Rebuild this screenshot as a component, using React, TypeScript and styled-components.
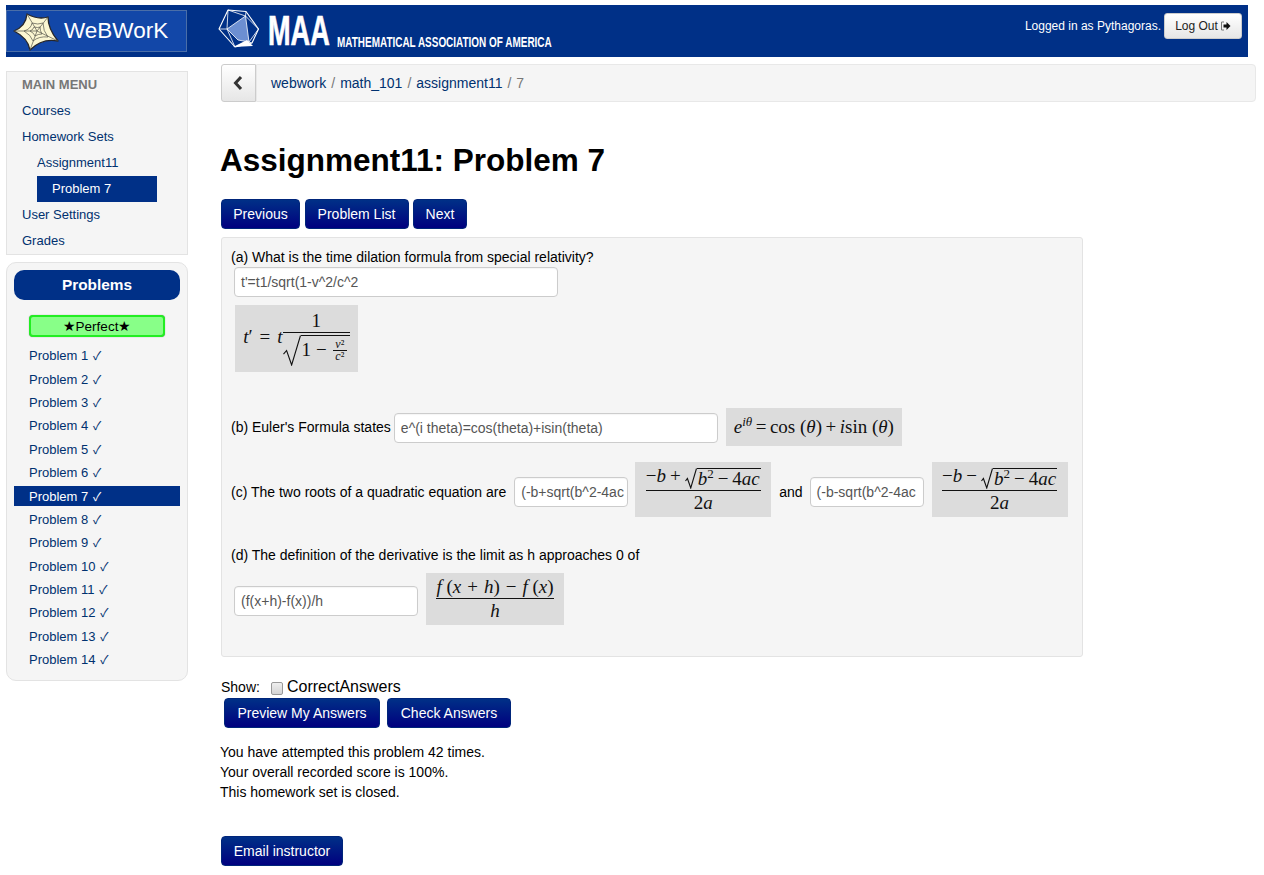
import React from "react";
import styled, { createGlobalStyle } from "styled-components";

const NAVY = "#003087";
const LINK = "#00316f";

const Global = createGlobalStyle`
  html, body { margin: 0; padding: 0; background: #fff; }
  body { font-family: "Liberation Sans", Arial, sans-serif; font-size: 14px; line-height: 20px; color: #000; }
  * { box-sizing: border-box; }
`;

const Page = styled.div`
  width: 1264px;
  height: 875px;
  overflow: hidden;
  padding: 5px 8px 0 6px;
`;

const Header = styled.header`
  width: 1242px;
  height: 52px;
  background: ${NAVY};
  display: flex;
  align-items: center;
  color: #fff;
`;

const LogoBox = styled.div`
  width: 181px;
  height: 42px;
  background: #1247a8;
  border: 1px solid #4a6ea8;
  display: flex;
  align-items: center;
  padding-left: 6px;
  gap: 5px;
  font-size: 22.5px;
  color: #fff;
`;

const MaaBlock = styled.div`
  margin-left: 31px;
  display: flex;
  align-items: center;
  height: 52px;
  width: 340px;
  flex: none;
`;

const MaaMark = styled.span`
  font-weight: 700;
  font-size: 43px;
  line-height: 38px;
  width: 62px;
  margin-left: 9px;
  margin-top: -3px;
  flex: none;
  -webkit-text-stroke: 0.7px #fff;
  transform: scaleX(0.63);
  transform-origin: left center;
`;

const MaaName = styled.span`
  font-weight: 700;
  font-size: 14px;
  white-space: nowrap;
  margin-left: 7px;
  margin-top: 22px;
  flex: none;
  transform: scaleX(0.711);
  transform-origin: left center;
`;

const UserArea = styled.div`
  margin-left: auto;
  margin-right: 6px;
  margin-bottom: 10px;
  display: flex;
  align-items: center;
  gap: 3px;
  font-size: 12px;
`;

const LogOut = styled.button`
  width: 78px;
  height: 26px;
  padding: 0;
  border: 1px solid #ccc;
  border-radius: 3px;
  background: linear-gradient(#fff, #e6e6e6);
  font: 12px "Liberation Sans", sans-serif;
  color: #222;
  display: flex;
  align-items: center;
  justify-content: center;
  gap: 2px;
`;

const Body = styled.div`
  display: flex;
  align-items: flex-start;
`;

const Sidebar = styled.aside`
  width: 182px;
  margin-top: 14px;
  display: flex;
  flex-direction: column;
  gap: 7px;
  font-size: 13px;
`;

const MenuPanel = styled.nav`
  height: 184px;
  background: #f5f5f5;
  border: 1px solid #e3e3e3;
  padding: 0 0 0 15px;
`;

const MenuHead = styled.div`
  height: 26px;
  line-height: 25px;
  font-weight: 700;
  color: #777;
  text-transform: uppercase;
`;

const MenuItem = styled.div<{ $sub?: boolean; $active?: boolean }>`
  height: 26px;
  line-height: 26px;
  color: ${(p) => (p.$active ? "#fff" : LINK)};
  background: ${(p) => (p.$active ? NAVY : "transparent")};
  margin-left: ${(p) => (p.$sub ? "15px" : "0")};
  padding-left: ${(p) => (p.$active ? "15px" : "0")};
  width: ${(p) => (p.$active ? "120px" : "auto")};
`;

const ProblemsPanel = styled.div`
  height: 419px;
  background: #f5f5f5;
  border: 1px solid #e3e3e3;
  border-radius: 10px;
  padding: 7px 7px 0;
`;

const ProblemsHead = styled.div`
  height: 30px;
  background: ${NAVY};
  border-radius: 10px;
  color: #fff;
  font-weight: 700;
  font-size: 15.4px;
  text-align: center;
  line-height: 30px;
`;

const Perfect = styled.div`
  width: 136px;
  height: 22px;
  margin: 15px 0 8.3px 15px;
  background: #88ff88;
  border: 2px solid #22ee22;
  border-radius: 4px;
  box-shadow: 0 0 1px #777;
  text-align: center;
  font-size: 13.5px;
  line-height: 20px;
  color: #000;
`;

const ProblemItem = styled.div<{ $active?: boolean }>`
  height: 20px;
  line-height: 19px;
  margin-bottom: 3.38px;
  padding-left: 15px;
  color: ${(p) => (p.$active ? "#fff" : LINK)};
  background: ${(p) => (p.$active ? NAVY : "transparent")};
`;

const Tick = styled.span`
  font-family: "Noto Sans CJK SC", "DejaVu Sans", sans-serif;
  margin-left: 1px;
  font-size: 12px;
`;

const Main = styled.main`
  margin-left: 33px;
  width: 1035px;
  flex: none;
  padding-top: 7px;
`;

const CrumbRow = styled.div`
  display: flex;
  height: 38px;
`;

const BackButton = styled.button`
  width: 35px;
  height: 38px;
  padding: 0;
  border: 1px solid #ccc;
  border-radius: 3px 0 0 3px;
  background: linear-gradient(#fff, #e6e6e6);
  display: flex;
  align-items: center;
  justify-content: center;
  color: #333;
`;

const Crumbs = styled.div`
  flex: 1;
  background: #f5f5f5;
  border: 1px solid #e8e8e8;
  border-radius: 0 4px 4px 0;
  padding-left: 14px;
  line-height: 36px;
  color: #777;
  display: flex;
  gap: 5px;
`;

const CrumbLink = styled.span`
  color: ${LINK};
`;

const Title = styled.h1`
  margin: 38px 0 0 -1px;
  font-size: 31.5px;
  line-height: 40px;
  font-weight: 700;
  color: #000;
`;

const ButtonRow = styled.div<{ $left?: number; $gap?: number; $top?: number }>`
  display: flex;
  gap: ${(p) => p.$gap ?? 5}px;
  margin-left: ${(p) => p.$left ?? 0}px;
  margin-top: ${(p) => p.$top ?? 0}px;
`;

const NavButton = styled.button<{ $w: number }>`
  width: ${(p) => p.$w}px;
  height: 30px;
  padding: 0;
  border: 1px solid #00257a;
  border-radius: 4px;
  background: linear-gradient(${NAVY}, #00007f);
  color: #fff;
  font: 14px "Liberation Sans", sans-serif;
  white-space: nowrap;
`;

const Well = styled.section`
  width: 862px;
  height: 420px;
  margin-top: 8px;
  background: #f5f5f5;
  border: 1px solid #e3e3e3;
  border-radius: 3px;
  padding: 9px 9px 0;
`;

const Line = styled.div`
  line-height: 20px;
`;

const Row = styled.div<{ $top: number }>`
  display: flex;
  align-items: center;
  margin-top: ${(p) => p.$top}px;
  white-space: nowrap;
`;

const Label = styled.span<{ $mt?: number; $ml?: number; $mr?: number }>`
  margin: ${(p) => p.$mt ?? 0}px ${(p) => p.$mr ?? 0}px 0 ${(p) => p.$ml ?? 0}px;
`;

const Answer = styled.div<{ $w: number; $ml?: number; $mt?: number }>`
  width: ${(p) => p.$w}px;
  height: 30px;
  flex: none;
  margin-left: ${(p) => p.$ml ?? 0}px;
  margin-top: ${(p) => p.$mt ?? 0}px;
  background: #fff;
  border: 1px solid #ccc;
  border-radius: 4px;
  padding: 0 6px;
  line-height: 29px;
  color: #555;
  overflow: hidden;
  white-space: nowrap;
  box-shadow: inset 0 1px 1px rgba(0, 0, 0, 0.04);
`;

const MathBox = styled.div<{ $w: number; $h: number; $ml?: number; $top?: number }>`
  width: ${(p) => p.$w}px;
  height: ${(p) => p.$h}px;
  flex: none;
  margin-left: ${(p) => p.$ml ?? 0}px;
  margin-top: ${(p) => p.$top ?? 0}px;
  background: #dcdcdc;
  display: flex;
  align-items: center;
  justify-content: center;
  font-family: "Liberation Serif", serif;
  font-size: 19px;
  color: #111;
  white-space: nowrap;
`;

const MathLine = styled.span`
  display: inline-block;
  line-height: 20px;
`;

const V = styled.i`
  font-style: italic;
`;

const Frac = styled.span`
  display: inline-flex;
  flex-direction: column;
  align-items: stretch;
  text-align: center;
  vertical-align: middle;
  line-height: 20px;
`;

const Num = styled.span`
  display: block;
  border-bottom: 1px solid #111;
  padding-bottom: 1px;
  text-align: center;
`;

const Den = styled.span`
  display: block;
  padding-top: 2px;
  text-align: center;
`;

const SmallFrac = styled.span`
  display: inline-flex;
  flex-direction: column;
  width: 14px;
  font-size: 12px;
  line-height: 11px;
  text-align: center;
  vertical-align: top;
  margin: 3px 2px 0 1px;
`;

const SmallNum = styled.span`
  display: block;
  border-bottom: 1px solid #111;
`;

const SmallDen = styled.span`
  display: block;
`;

const Radical = styled.span`
  display: inline-flex;
  align-items: stretch;
  vertical-align: middle;
`;

const Radicand = styled.span`
  display: inline-block;
  border-top: 1px solid #111;
  padding: 0 1px;
  white-space: nowrap;
  line-height: 28px;
`;

const Radicand2 = styled(Radicand)`
  line-height: 20px;
`;

const Op = styled.span<{ $m?: number }>`
  margin: 0 ${(p) => p.$m ?? 4}px;
`;

const Sup = styled.sup`
  font-size: 13px;
  line-height: 0;
`;

const ShowRow = styled.div`
  display: flex;
  align-items: center;
  height: 20px;
  margin-top: 20px;
`;

const Check = styled.span`
  width: 12px;
  height: 13px;
  margin: 2px 4px 0 11px;
  border: 1px solid #999;
  border-radius: 2px;
  background: linear-gradient(#eee, #d4d4d4);
`;

const BigLabel = styled.span`
  font-size: 16px;
`;

const Status = styled.div`
  margin: 14px 0 0 -1px;
`;

function Root({ h, w }: { h: number; w: number }) {
  return (
    <svg width={w} height={h} viewBox={`0 0 ${w} ${h}`} style={{ flex: "none" }}>
      <path
        d={`M0.5 ${h * 0.62} L${w * 0.2} ${h * 0.5} L${w * 0.48} ${h - 1} L${w - 0.5} 0.5`}
        fill="none"
        stroke="#111"
        strokeWidth="1.1"
      />
    </svg>
  );
}

function StarLogo() {
  return (
    <svg width="46" height="40" viewBox="0 0 46 40" style={{ flex: "none" }}>
      <path
        d="M14 3 Q25 9 35 6 Q35 18 45 30 Q29 27 17 39 Q15 27 1 20 Q13 15 14 3 Z"
        fill="#fbf7d2"
        stroke="#26262a"
        strokeWidth="1.3"
        strokeLinejoin="round"
      />
      <g fill="none" stroke="#55554a" strokeWidth="0.7">
        <path d="M24 20 L14 3 M24 20 L35 6 M24 20 L45 30 M24 20 L17 39 M24 20 L1 20" />
        <path d="M19 12 Q25 14 30 12 Q30 20 35 26 Q26 25 20 30 Q18 24 11 20 Q18 18 19 12 Z" />
        <path d="M21 16 Q25 17 27 16 Q27 20 29 23 Q25 23 22 25 Q21 22 17 20 Q20 19 21 16 Z" />
      </g>
    </svg>
  );
}

function MaaLogo() {
  return (
    <svg width="41" height="39" viewBox="0 0 41 39" style={{ flex: "none", marginTop: -5 }}>
      <path d="M10 1 L28 2.5 L40.5 20 L34 34 L17 38 L1 20 Z" fill={NAVY} stroke="#fff" strokeWidth="1.1" strokeLinejoin="round" />
      <path d="M9 20 L27.5 7 L31 33 L20 31 Z" fill="#6c8fd2" />
      <path d="M15 38 L29 31 L35 37 Z" fill="#fff" />
      <path
        d="M10 1 L27.5 7 M10 1 L9 20 M1 20 L9 20 M28 2.5 L27.5 7 M27.5 7 L9 20 M9 20 L20 31 M27.5 7 L31 33 M27.5 7 L40.5 20 M40.5 20 L31 33 M9 20 L17 38 M20 31 L31 33 M34 34 L31 33"
        stroke="#fff"
        strokeWidth="0.8"
        fill="none"
      />
    </svg>
  );
}

function LogOutIcon() {
  return (
    <svg width="11" height="10" viewBox="0 0 11 10">
      <path d="M4 1 H1.5 V9 H4" fill="none" stroke="#777" strokeWidth="1" />
      <path d="M3.5 3.5 H6.5 V1 L10.5 5 L6.5 9 V6.5 H3.5 Z" fill="#111" />
    </svg>
  );
}

function Chevron() {
  return (
    <svg width="12" height="16" viewBox="0 0 12 16" style={{ marginLeft: -2 }}>
      <path d="M9 2 L3.5 8 L9 14" fill="none" stroke="#333" strokeWidth="3" />
    </svg>
  );
}

const problems = Array.from({ length: 14 }, (_, i) => i + 1);

export default function App() {
  return (
    <Page>
      <Global />
      <Header>
        <LogoBox>
          <StarLogo />
          <span>WeBWorK</span>
        </LogoBox>
        <MaaBlock>
          <MaaLogo />
          <MaaMark>MAA</MaaMark>
          <MaaName>MATHEMATICAL ASSOCIATION OF AMERICA</MaaName>
        </MaaBlock>
        <UserArea>
          <span>Logged in as Pythagoras.</span>
          <LogOut>
            Log Out <LogOutIcon />
          </LogOut>
        </UserArea>
      </Header>
      <Body>
        <Sidebar>
          <MenuPanel>
            <MenuHead>Main Menu</MenuHead>
            <MenuItem>Courses</MenuItem>
            <MenuItem>Homework Sets</MenuItem>
            <MenuItem $sub>Assignment11</MenuItem>
            <MenuItem $sub $active>Problem 7</MenuItem>
            <MenuItem>User Settings</MenuItem>
            <MenuItem>Grades</MenuItem>
          </MenuPanel>
          <ProblemsPanel>
            <ProblemsHead>Problems</ProblemsHead>
            <Perfect>★Perfect★</Perfect>
            {problems.map((n) => (
              <ProblemItem key={n} $active={n === 7}>
                Problem {n} <Tick>✓</Tick>
              </ProblemItem>
            ))}
          </ProblemsPanel>
        </Sidebar>
        <Main>
          <CrumbRow>
            <BackButton aria-label="Back">
              <Chevron />
            </BackButton>
            <Crumbs>
              <CrumbLink>webwork</CrumbLink>/<CrumbLink>math_101</CrumbLink>/<CrumbLink>assignment11</CrumbLink>/<span>7</span>
            </Crumbs>
          </CrumbRow>
          <Title>Assignment11: Problem 7</Title>
          <ButtonRow $top={19} $gap={4.5}>
            <NavButton $w={79}>Previous</NavButton>
            <NavButton $w={104}>Problem List</NavButton>
            <NavButton $w={54}>Next</NavButton>
          </ButtonRow>
          <Well>
            <Line>(a) What is the time dilation formula from special relativity?</Line>
            <Answer $w={324} $ml={3}>t'=t1/sqrt(1-v^2/c^2</Answer>
            <MathBox $w={123} $h={67} $ml={4} $top={8}>
              <MathLine>
                <V>t</V>′<Op $m={7}>=</Op><V>t</V>
                <Frac>
                  <Num>1</Num>
                  <Den>
                    <Radical>
                      <Root w={18} h={31} />
                      <Radicand>
                        1<Op $m={5}>−</Op>
                        <SmallFrac>
                          <SmallNum><V>v</V>²</SmallNum>
                          <SmallDen><V>c</V>²</SmallDen>
                        </SmallFrac>
                      </Radicand>
                    </Radical>
                  </Den>
                </Frac>
              </MathLine>
            </MathBox>
            <Row $top={36}>
              (b) Euler's Formula states
              <Answer $w={324} $ml={3} $mt={2}>e^(i theta)=cos(theta)+isin(theta)</Answer>
              <MathBox $w={176} $h={38} $ml={8}>
                <MathLine>
                  <V>e</V>
                  <Sup><V>iθ</V></Sup>
                  <Op $m={3.5}>=</Op>cos (<V>θ</V>)<Op $m={3.5}>+</Op><V>i</V>sin (<V>θ</V>)
                </MathLine>
              </MathBox>
            </Row>
            <Row $top={16}>
              <Label $mt={4}>(c) The two roots of a quadratic equation are</Label>
              <Answer $w={114} $ml={8} $mt={4}>(-b+sqrt(b^2-4ac</Answer>
              <MathBox $w={136} $h={55} $ml={7}>
                <MathLine>
                  <Frac>
                    <Num>
                      −<V>b</V><Op>+</Op>
                      <Radical>
                        <Root w={12} h={21} />
                        <Radicand2><V>b</V><Sup>2</Sup><Op>−</Op>4<V>ac</V></Radicand2>
                      </Radical>
                    </Num>
                    <Den>2<V>a</V></Den>
                  </Frac>
                </MathLine>
              </MathBox>
              <Label $mt={4} $ml={8} $mr={7}>and</Label>
              <Answer $w={114} $mt={4}>(-b-sqrt(b^2-4ac</Answer>
              <MathBox $w={136} $h={55} $ml={8}>
                <MathLine>
                  <Frac>
                    <Num>
                      −<V>b</V><Op>−</Op>
                      <Radical>
                        <Root w={12} h={21} />
                        <Radicand2><V>b</V><Sup>2</Sup><Op>−</Op>4<V>ac</V></Radicand2>
                      </Radical>
                    </Num>
                    <Den>2<V>a</V></Den>
                  </Frac>
                </MathLine>
              </MathBox>
            </Row>
            <Row $top={28}>(d) The definition of the derivative is the limit as h approaches 0 of</Row>
            <Row $top={8}>
              <Answer $w={184} $ml={3} $mt={4}>(f(x+h)-f(x))/h</Answer>
              <MathBox $w={138} $h={52} $ml={8}>
                <MathLine>
                  <Frac>
                    <Num>
                      <V>f</V> (<V>x</V><Op $m={6}>+</Op><V>h</V>)<Op $m={6}>−</Op><V>f</V> (<V>x</V>)
                    </Num>
                    <Den><V>h</V></Den>
                  </Frac>
                </MathLine>
              </MathBox>
            </Row>
          </Well>
          <ShowRow>
            Show:
            <Check />
            <BigLabel>CorrectAnswers</BigLabel>
          </ShowRow>
          <ButtonRow $left={3} $gap={7} $top={1}>
            <NavButton $w={156}>Preview My Answers</NavButton>
            <NavButton $w={124}>Check Answers</NavButton>
          </ButtonRow>
          <Status>
            <Line>You have attempted this problem 42 times.</Line>
            <Line>Your overall recorded score is 100%.</Line>
            <Line>This homework set is closed.</Line>
          </Status>
          <ButtonRow $top={34}>
            <NavButton $w={122}>Email instructor</NavButton>
          </ButtonRow>
        </Main>
      </Body>
    </Page>
  );
}
